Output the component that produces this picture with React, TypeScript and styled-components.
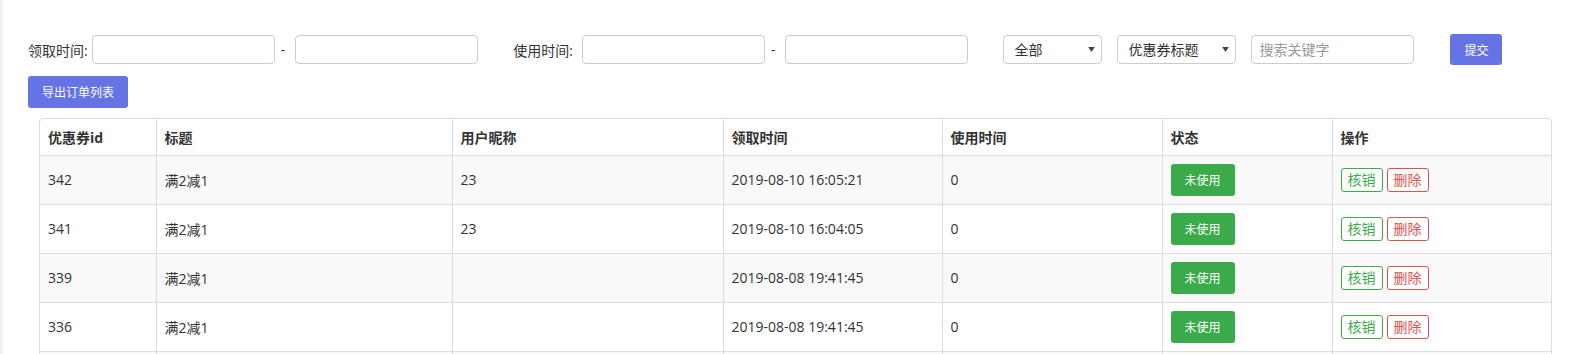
import styled, { createGlobalStyle } from "styled-components";

const GlobalStyle = createGlobalStyle`
  * { box-sizing: border-box; }
  body {
    margin: 0;
    background: #fff;
    font-family: "Open Sans", "Noto Sans CJK SC", sans-serif;
    font-size: 14px;
    color: #333;
  }
`;

const rows = [
  { id: 342, title: "满2减1", nick: "23", got: "2019-08-10 16:05:21", used: "0" },
  { id: 341, title: "满2减1", nick: "23", got: "2019-08-10 16:04:05", used: "0" },
  { id: 339, title: "满2减1", nick: "", got: "2019-08-08 19:41:45", used: "0" },
  { id: 336, title: "满2减1", nick: "", got: "2019-08-08 19:41:45", used: "0" },
];

const columns = [
  { label: "优惠券id", width: 116 },
  { label: "标题", width: 296 },
  { label: "用户昵称", width: 271 },
  { label: "领取时间", width: 219 },
  { label: "使用时间", width: 220 },
  { label: "状态", width: 170 },
  { label: "操作", width: 219 },
];

export default function App() {
  return (
    <>
      <GlobalStyle />
      <Page>
        <SideEdge />
        <Content>
          <FilterBar>
            <Label $space={4}>领取时间:</Label>
            <DateInput type="text" />
            <Dash>-</Dash>
            <DateInput type="text" />

            <Label $offset={35} $space={9}>使用时间:</Label>
            <DateInput type="text" />
            <Dash>-</Dash>
            <DateInput type="text" />

            <SelectWrap $width={99} $offset={35}>
              <Select defaultValue="all">
                <option value="all">全部</option>
              </Select>
              <Caret viewBox="0 0 8 6">
                <path d="M0 0h8L4 6z" />
              </Caret>
            </SelectWrap>
            <SelectWrap $width={119} $offset={15}>
              <Select defaultValue="title">
                <option value="title">优惠券标题</option>
              </Select>
              <Caret viewBox="0 0 8 6">
                <path d="M0 0h8L4 6z" />
              </Caret>
            </SelectWrap>
            <Search type="text" placeholder="搜索关键字" />
            <PrimaryButton $offset={36}>提交</PrimaryButton>
          </FilterBar>

          <ExportButton>导出订单列表</ExportButton>

          <TableBox>
            <Table>
              <colgroup>
                {columns.map((c) => (
                  <col key={c.label} style={{ width: c.width }} />
                ))}
              </colgroup>
              <thead>
                <tr>
                  {columns.map((c) => (
                    <Th key={c.label}>{c.label}</Th>
                  ))}
                </tr>
              </thead>
              <tbody>
                {rows.map((r) => (
                  <Tr key={r.id}>
                    <Td>{r.id}</Td>
                    <Td>{r.title}</Td>
                    <Td>{r.nick}</Td>
                    <Td>{r.got}</Td>
                    <Td>{r.used}</Td>
                    <Td>
                      <StatusBadge>未使用</StatusBadge>
                    </Td>
                    <Td>
                      <Actions>
                        <OutlineButton $tone="#3aaa4a">核销</OutlineButton>
                        <OutlineButton $tone="#d9534f">删除</OutlineButton>
                      </Actions>
                    </Td>
                  </Tr>
                ))}
                <Tr>
                  {columns.map((c) => (
                    <Td key={c.label} />
                  ))}
                </Tr>
              </tbody>
            </Table>
          </TableBox>
        </Content>
      </Page>
    </>
  );
}

const Page = styled.div`
  display: flex;
  min-height: 100vh;
`;

const SideEdge = styled.div`
  width: 3px;
  flex-shrink: 0;
  background: #eef2f5;
`;

const Content = styled.main`
  flex: 1;
  padding: 34px 25px 0 25px;
`;

const FilterBar = styled.div`
  display: flex;
  align-items: center;
  height: 31px;
`;

const Label = styled.span<{ $offset?: number; $space?: number }>`
  margin-left: ${(p) => p.$offset ?? 0}px;
  margin-right: ${(p) => p.$space ?? 5}px;
  font-size: 14px;
  color: #333;
  white-space: nowrap;
`;

const fieldBase = `
  height: 29px;
  border: 1px solid #ccc;
  border-radius: 4px;
  background: #fff;
  font-family: "Open Sans", "Noto Sans CJK SC", sans-serif;
  font-size: 14px;
  color: #333;
  outline: none;
`;

const DateInput = styled.input`
  ${fieldBase}
  width: 183px;
  padding: 0 8px;
`;

const Dash = styled.span`
  margin: 0 10px 0 6px;
  color: #333;
`;

const SelectWrap = styled.div<{ $width: number; $offset: number }>`
  position: relative;
  width: ${(p) => p.$width}px;
  margin-left: ${(p) => p.$offset}px;
`;

const Select = styled.select`
  ${fieldBase}
  width: 100%;
  padding: 0 20px 0 10px;
  appearance: none;
`;

const Caret = styled.svg`
  position: absolute;
  right: 7px;
  top: 12px;
  width: 7px;
  height: 5px;
  fill: #444;
  pointer-events: none;
`;

const Search = styled.input`
  ${fieldBase}
  width: 163px;
  margin-left: 15px;
  padding: 0 7px;
  &::placeholder { color: #999; }
`;

const PrimaryButton = styled.button<{ $offset?: number }>`
  height: 31px;
  min-width: 52px;
  margin-left: ${(p) => p.$offset ?? 0}px;
  padding: 0 13px;
  border: none;
  border-radius: 3px;
  background: #6673e5;
  color: #fff;
  font-family: "Open Sans", "Noto Sans CJK SC", sans-serif;
  font-size: 12px;
`;

const ExportButton = styled(PrimaryButton)`
  display: block;
  height: 32px;
  margin-top: 11px;
  padding: 0 14px;
`;

const TableBox = styled.div`
  margin: 10px 0 0 11px;
  border: 1px solid #ddd;
  border-radius: 4px 4px 0 0;
  overflow: hidden;
`;

const Table = styled.table`
  width: 100%;
  table-layout: fixed;
  border-collapse: collapse;
`;

const Th = styled.th`
  height: 36px;
  padding: 0 8px;
  text-align: left;
  font-weight: 700;
  font-size: 14px;
  color: #333;
  border-bottom: 1px solid #ddd;
  & + & { border-left: 1px solid #ddd; }
`;

const Tr = styled.tr`
  &:nth-child(odd) { background: #f9f9f9; }
`;

const Td = styled.td`
  height: 49px;
  padding: 0 8px;
  font-size: 14px;
  color: #333;
  vertical-align: middle;
  border-bottom: 1px solid #ddd;
  & + & { border-left: 1px solid #ddd; }
`;

const StatusBadge = styled.button`
  width: 64px;
  height: 32px;
  padding: 0;
  border: none;
  border-radius: 3px;
  background: #3aaa4a;
  color: #fff;
  font-family: "Open Sans", "Noto Sans CJK SC", sans-serif;
  font-size: 12px;
  display: block;
`;

const Actions = styled.div`
  display: flex;
  gap: 4px;
`;

const OutlineButton = styled.button<{ $tone: string }>`
  width: 42px;
  height: 24px;
  padding: 0;
  border: 1px solid ${(p) => p.$tone};
  border-radius: 3px;
  background: #fff;
  color: ${(p) => p.$tone};
  font-family: "Open Sans", "Noto Sans CJK SC", sans-serif;
  font-size: 14px;
  line-height: 22px;
`;
